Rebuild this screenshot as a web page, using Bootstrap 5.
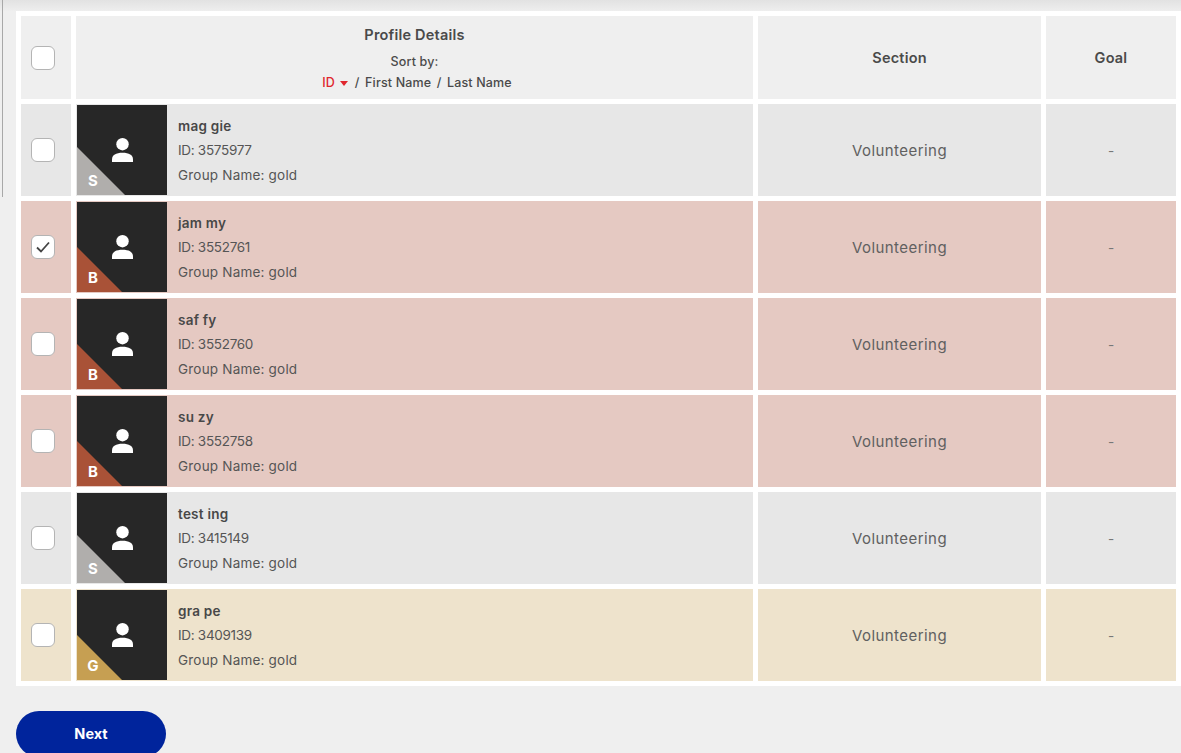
<!DOCTYPE html>
<html lang="en">
<head>
    <meta charset="UTF-8">
    <meta name="viewport" content="width=device-width, initial-scale=1.0">
    <title>Profiles</title>
    <link href="https://cdn.jsdelivr.net/npm/bootstrap@5.3.0/dist/css/bootstrap.min.css" rel="stylesheet">
    <style>
        html, body { height: 753px; overflow: hidden; }
        body {
            background: #efefef;
            color: #4a4a4a;
            font-family: Inter, "Liberation Sans", sans-serif;
            font-size: 13.5px;
        }
        .top-shade { height: 11px; background: linear-gradient(#e2e2e2, #eeeeee); }
        .side-line { position: absolute; left: 2px; top: 0; width: 1px; height: 197px; background: #a8a8a8; }
        .profile-grid {
            width: 1165px;
            table-layout: fixed;
            border-collapse: separate;
            border-spacing: 5px;
            background: #fff;
        }
        .profile-grid th { background: #efefef; font-size: 14.5px; font-weight: 600; height: 83px; text-align: center; vertical-align: middle; padding: 0; letter-spacing: .2px; }
        .profile-grid td { height: 92px; padding: 0; text-align: center; vertical-align: middle; }
        .profile-grid .cell-check { padding: 0 6px 0 0; }
        .profile-grid .cell-sort { padding-top: 3px; }
        .c-check { width: 50px; }
        .c-profile { width: 677px; }
        .c-section { width: 283px; }
        .c-goal { width: 130px; }
        .tier-silver td { background: #e7e7e7; }
        .tier-bronze td { background: #e5c9c2; }
        .tier-gold td { background: #eee3cc; }
        .grid-check.form-check-input {
            width: 24px;
            height: 24px;
            margin: 0;
            float: none;
            vertical-align: middle;
            background-color: #fff;
            border: 1px solid #b4b4b4;
            border-radius: 6px;
        }
        .grid-check.form-check-input:checked {
            background-color: #fff;
            border-color: #b4b4b4;
            background-size: 16px 16px;
            background-image: url("data:image/svg+xml,%3csvg xmlns='http://www.w3.org/2000/svg' viewBox='0 0 16 16'%3e%3cpath fill='none' stroke='%23444' stroke-width='1.8' d='M2 8.500l4 4 8-9'/%3e%3c/svg%3e");
        }
        .thumb { width: 90px; height: 90px; margin: 1px; background: #272727; flex: none; }
        .thumb-corner { position: absolute; left: 0; bottom: 0; width: 45px; height: 45px; clip-path: polygon(0 0, 100% 100%, 0 100%); }
        .thumb-corner-s { width: 48px; height: 48px; background: #b0aeac; }
        .thumb-corner-b { background: #a95237; }
        .thumb-corner-g { background: #c69f52; }
        .thumb-letter { position: absolute; left: 8px; bottom: 6px; width: 16px; text-align: center; color: #fff; font-size: 15px; font-weight: 700; line-height: 16px; }
        .person { width: 21px; height: 24px; }
        .info { padding: 2px 0 0 10px; text-align: left; line-height: 24.5px; letter-spacing: .2px; color: #555; }
        .info-name { font-weight: 600; color: #484848; letter-spacing: .25px; }
        .info-id { margin: -1px 0 1px; letter-spacing: -.3px; }
        .sort-label { font-size: 12.5px; font-weight: 500; line-height: 20px; letter-spacing: .15px; }
        .sort-options { margin-top: 1px; padding-left: 5px; }
        .sort-sep { margin: 0 2px; }
        .section-text { padding-top: 2px !important; font-size: 15px; color: #606060; letter-spacing: .45px; }
        .goal-text { padding-top: 2px !important; color: #777; }
        .head-title { margin-bottom: 7px; line-height: 20px; }
        .sort-active { color: #e0262e; }
        .sort-caret { display: inline-block; width: 0; height: 0; margin: 0 1px 1px 2px; border: 4px solid transparent; border-top: 5px solid #e0262e; border-bottom: 0; }
        .btn-next {
            width: 150px;
            height: 46px;
            margin-top: 25px;
            padding: 0;
            background: #00249c;
            color: #fff;
            border: 0;
            border-radius: 23px;
            font-weight: 700;
            font-size: 14.5px;
        }
    </style>
</head>
<body class="position-relative">
    <div class="side-line"></div>
    <div class="top-shade"></div>
    <main class="ps-3">
        <table class="profile-grid">
            <colgroup>
                <col class="c-check"><col class="c-profile"><col class="c-section"><col class="c-goal">
            </colgroup>
            <thead>
                <tr>
                    <th class="cell-check"><input class="form-check-input grid-check" type="checkbox" aria-label="Select all"></th>
                    <th class="cell-sort">
                        <div class="head-title">Profile Details</div>
                        <div class="sort-label">Sort by:</div>
                        <div class="sort-label sort-options"><span class="sort-active">ID <span class="sort-caret"></span></span> <span class="sort-sep">/</span> First Name <span class="sort-sep">/</span> Last Name</div>
                    </th>
                    <th>Section</th>
                    <th>Goal</th>
                </tr>
            </thead>
            <tbody id="rows"></tbody>
        </table>
        <button class="btn btn-next" type="button">Next</button>
    </main>
    <script>
        const people = [
            ["mag gie", "3575977", "S", "silver", false],
            ["jam my", "3552761", "B", "bronze", true],
            ["saf fy", "3552760", "B", "bronze", false],
            ["su zy", "3552758", "B", "bronze", false],
            ["test ing", "3415149", "S", "silver", false],
            ["gra pe", "3409139", "G", "gold", false]
        ];
        document.getElementById("rows").innerHTML = people.map(p => `
            <tr class="tier-${p[3]}">
                <td class="cell-check"><input class="form-check-input grid-check" type="checkbox" aria-label="Select ${p[0]}" ${p[4] ? "checked" : ""}></td>
                <td>
                    <div class="d-flex align-items-center">
                        <div class="thumb position-relative d-flex align-items-center justify-content-center">
                            <svg class="person" viewBox="0 0 21 24"><circle cx="10.5" cy="6.2" r="6.2" fill="#fff"/><path d="M0 24v-2.5C0 17 4 14.8 10.5 14.8S21 17 21 21.500V24z" fill="#fff"/></svg>
                            <div class="thumb-corner thumb-corner-${p[2].toLowerCase()}"></div>
                            <div class="thumb-letter">${p[2]}</div>
                        </div>
                        <div class="info">
                            <div class="info-name">${p[0]}</div>
                            <div class="info-id">ID: ${p[1]}</div>
                            <div>Group Name: gold</div>
                        </div>
                    </div>
                </td>
                <td class="section-text">Volunteering</td>
                <td class="goal-text">-</td>
            </tr>`).join("");
    </script>
    <script src="https://cdn.jsdelivr.net/npm/bootstrap@5.3.0/dist/js/bootstrap.bundle.min.js"></script>
</body>
</html>
